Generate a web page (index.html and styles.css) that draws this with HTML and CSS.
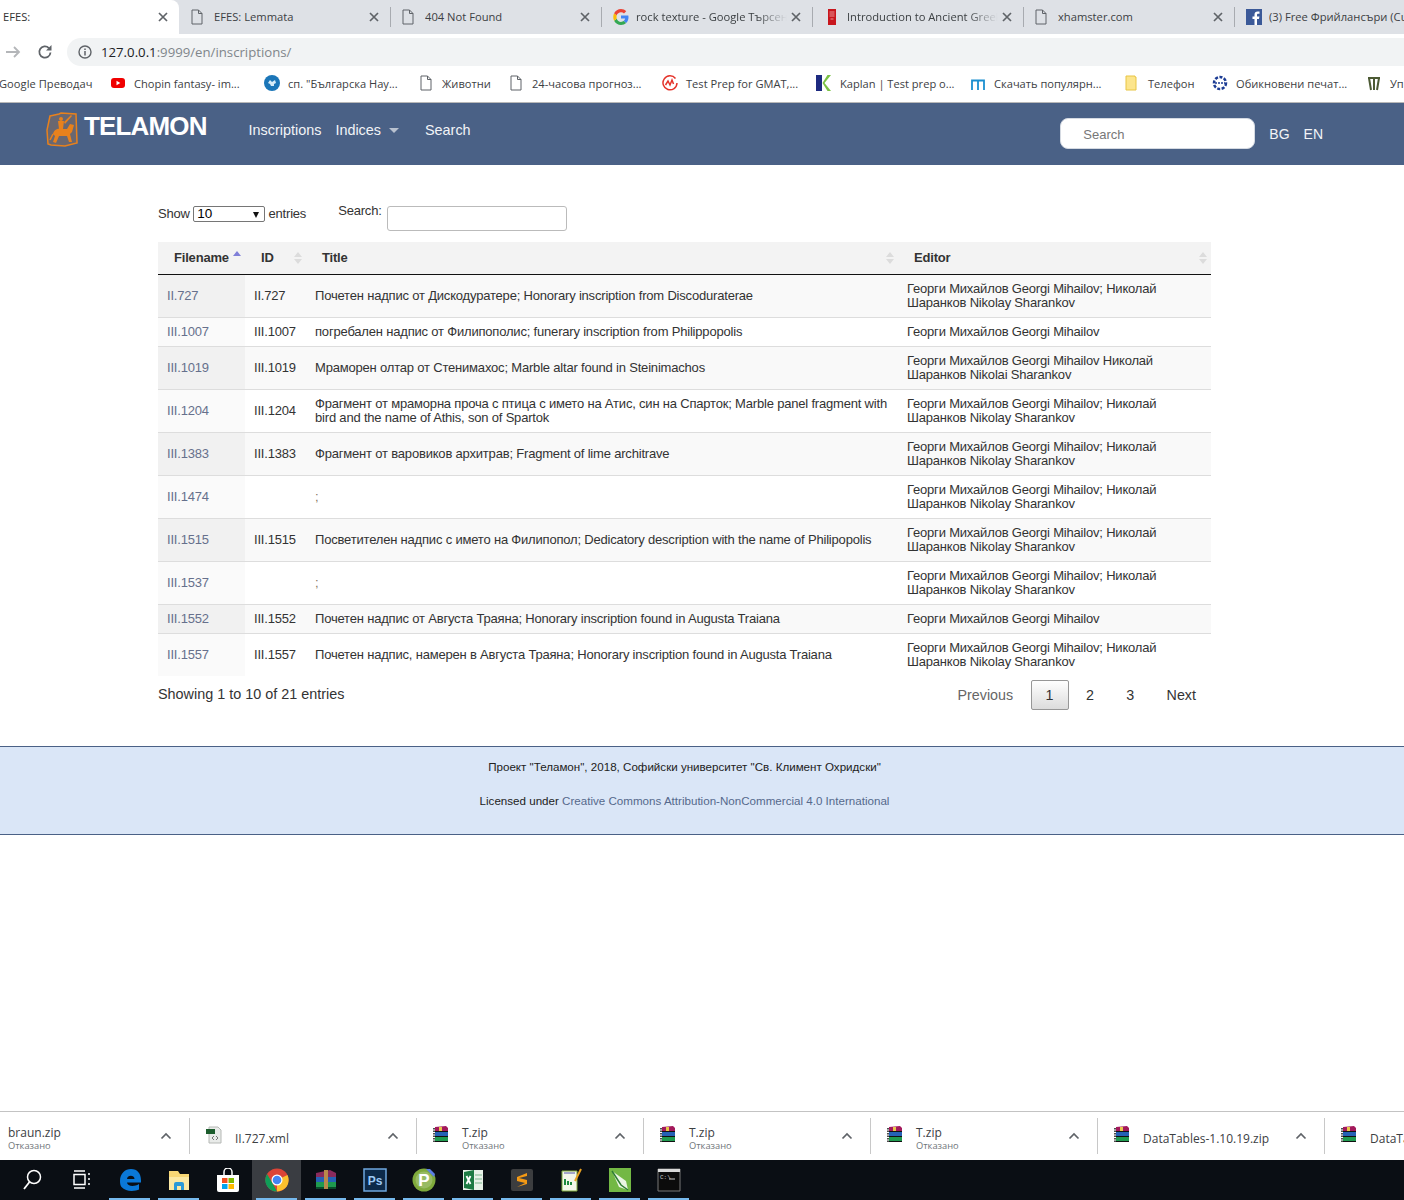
FILE: index.html
```html
<!DOCTYPE html>
<html>
<head>
<meta charset="utf-8">
<title>EFES:</title>
<link rel="stylesheet" href="styles.css">
</head>
<body>
<svg class="defs" width="0" height="0">
  <symbol id="i-file" viewBox="0 0 12 16"><path d="M1 1h6.500L11 4.500V15H1z M7.500 1v3.500H11" fill="none" stroke="#5f6368" stroke-width="1"/></symbol>
  <symbol id="i-close" viewBox="0 0 10 10"><path d="M1 1l8 8M9 1L1 9" stroke="#5f6368" stroke-width="1.700" fill="none"/></symbol>
  <symbol id="i-rar" viewBox="0 0 18 18">
    <path d="M3 1l11-1 2 2v4H3z" fill="#a3195b"/><path d="M7 1h3v4H7z" fill="#e8c84a"/>
    <path d="M3 6h13v5H3z" fill="#2561b5"/><path d="M3 11h13v5H3z" fill="#1f9a4f"/>
    <path d="M3 5.500h13M3 10.500h13M3 15.500h13" stroke="#111" stroke-width="1"/>
    <path d="M2 2v15" stroke="#222" stroke-width="1.600" stroke-dasharray="1.500 1"/>
  </symbol>
  <symbol id="i-chev" viewBox="0 0 12 8"><path d="M1.500 6.500L6 2l4.500 4.500" fill="none" stroke="#5f6368" stroke-width="1.700"/></symbol>
</svg>

<div class="chrome">
  <div class="tabstrip">
    <div class="tab tab-active"><span class="tab-title">EFES:</span><svg class="tab-x"><use href="#i-close"/></svg></div>
    <div class="tab"><svg class="fav-file"><use href="#i-file"/></svg><span class="tab-title">EFES: Lemmata</span><svg class="tab-x"><use href="#i-close"/></svg></div>
    <div class="tab tab-sep"><svg class="fav-file"><use href="#i-file"/></svg><span class="tab-title">404 Not Found</span><svg class="tab-x"><use href="#i-close"/></svg></div>
    <div class="tab tab-sep">
      <svg class="fav" viewBox="0 0 16 16"><path d="M15.500 8.200c0-.6-.1-1.100-.2-1.600H8v3h4.200c-.2 1-.7 1.800-1.600 2.400l2.500 2c1.500-1.400 2.400-3.400 2.400-5.800z" fill="#4285f4"/><path d="M8 16c2.100 0 3.900-.7 5.100-1.900l-2.500-2c-.7.500-1.500.8-2.600.8-2 0-3.700-1.400-4.300-3.200L1.100 11.700C2.400 14.300 5 16 8 16z" fill="#34a853"/><path d="M3.700 9.700c-.3-1-.3-2.400 0-3.400L1.100 4.300C0 6.500 0 9.500 1.100 11.700z" fill="#fbbc05"/><path d="M8 3.200c1.200 0 2.200.4 3 1.200l2.200-2.200C11.900.9 10.100 0 8 0 5 0 2.400 1.700 1.100 4.300l2.600 2C4.300 4.500 6 3.200 8 3.200z" fill="#ea4335"/></svg>
      <span class="tab-title tab-fade">rock texture - Google Търсене</span><svg class="tab-x"><use href="#i-close"/></svg></div>
    <div class="tab tab-sep">
      <svg class="fav" viewBox="0 0 16 16"><path d="M4 0h8v16H4z" fill="#c8161d"/><path d="M5.500 3h5M5.500 5h5M5.500 7h5M6.500 10h3" stroke="#f2b8b8" stroke-width=".8"/></svg>
      <span class="tab-title tab-fade">Introduction to Ancient Greek</span><svg class="tab-x"><use href="#i-close"/></svg></div>
    <div class="tab tab-sep"><svg class="fav-file"><use href="#i-file"/></svg><span class="tab-title">xhamster.com</span><svg class="tab-x"><use href="#i-close"/></svg></div>
    <div class="tab tab-sep">
      <svg class="fav" viewBox="0 0 16 16"><path d="M0 0h16v16H0z" fill="#3b5998"/><path d="M11 16V10h2l.4-2.500H11V6c0-.8.3-1.200 1.200-1.200h1.300V2.600c-.5-.1-1.200-.1-1.900-.1-1.900 0-3.100 1.100-3.100 3.200v1.800H6.500V10h2v6z" fill="#fff"/></svg>
      <span class="tab-title">(3) Free Фрийлансъри (Custom)</span></div>
  </div>

  <div class="toolbar">
    <svg class="tool-icon" viewBox="0 0 16 16"><path d="M1 8h13M9 3l5 5-5 5" fill="none" stroke="#b4b6b9" stroke-width="1.800"/></svg>
    <svg class="tool-icon" viewBox="0 0 16 16"><path d="M13.500 8.500a5.600 5.600 0 1 1-1.600-4.400" fill="none" stroke="#5f6368" stroke-width="1.800"/><path d="M14.500 1v5.500H9z" fill="#5f6368"/></svg>
    <div class="omnibox">
      <svg class="omni-info" viewBox="0 0 14 14"><circle cx="7" cy="7" r="6" fill="none" stroke="#5f6368" stroke-width="1.400"/><path d="M7 6v4.500M7 3.500v1.400" stroke="#5f6368" stroke-width="1.500"/></svg>
      <span class="url"><b>127.0.0.1</b>:9999/en/inscriptions/</span>
    </div>
  </div>

  <div class="bookmarks">
    <div class="bm bm-first"><span>Google Преводач</span></div>
    <div class="bm bm-yt"><svg class="fav" viewBox="0 0 16 16"><rect x="1" y="3" width="14" height="10" rx="3" fill="#f00000"/><path d="M6.500 5.800v4.400L10.300 8z" fill="#fff"/></svg><span>Chopin fantasy- im...</span></div>
    <div class="bm bm-bg"><svg class="fav" viewBox="0 0 16 16"><circle cx="8" cy="8" r="8" fill="#1b76b8"/><path d="M4 8l2-3 2 2 3-2 1 3-2 1v2H7L6 9z" fill="#d6ecf8"/></svg><span>сп. "Българска Нау...</span></div>
    <div class="bm bm-file"><svg class="fav-file"><use href="#i-file"/></svg><span>Животни</span></div>
    <div class="bm bm-file2"><svg class="fav-file"><use href="#i-file"/></svg><span>24-часова прогноз...</span></div>
    <div class="bm bm-gmat"><svg class="fav" viewBox="0 0 16 16"><path d="M13.500 3.500A7 7 0 1 0 15 8" fill="none" stroke="#e5332a" stroke-width="1.500"/><path d="M3.500 10l2.500-4 2 4 2-5 1.500 4" fill="none" stroke="#e5332a" stroke-width="1.500"/></svg><span>Test Prep for GMAT,...</span></div>
    <div class="bm bm-kap"><svg class="fav" viewBox="0 0 16 16"><path d="M0 0h6v16H0z" fill="#1d2a80"/><path d="M15 0L8.500 8l6.500 8h-3.500L6.500 8l5-8z" fill="#7ac143"/></svg><span>Kaplan | Test prep o...</span></div>
    <div class="bm bm-m"><svg class="fav" viewBox="0 0 16 16"><path d="M2 15V5.500h12V15M8 5.500V15" fill="none" stroke="#1b8fd0" stroke-width="1.800"/></svg><span>Скачать популярн...</span></div>
    <div class="bm bm-fold"><svg class="fav" viewBox="0 0 16 16"><path d="M2 1h9v1h1v13H2z" fill="#fce58c" stroke="#e8c544" stroke-width="1"/></svg><span>Телефон</span></div>
    <div class="bm bm-ob"><svg class="fav" viewBox="0 0 16 16"><circle cx="8" cy="8" r="6" fill="none" stroke="#1c3c94" stroke-width="2.500" stroke-dasharray="3 1.500"/><path d="M3 8h10" stroke="#1c3c94" stroke-width="1.500" stroke-dasharray="2 1"/></svg><span>Обикновени печат...</span></div>
    <div class="bm"><svg class="fav" viewBox="0 0 16 16"><path d="M3 3l2 12M8 2v13M13 3l-2 12M2 3h12" fill="none" stroke="#4c5a34" stroke-width="2"/></svg><span>Управление</span></div>
  </div>
</div>

<header class="navbar">
  <a class="logo">
    <svg class="logo-mark" viewBox="0 0 32 35">
      <path d="M4 4l9-2 2-1 15 1 1 29-12 3-14-1-3-1-1-14z" fill="#e8811c" fill-opacity=".2" stroke="#e8811c" stroke-width="1.500"/>
      <circle cx="15" cy="7" r="2" fill="#e8811c"/>
      <path d="M12 9h6l-1 8h-4zM18 10l7-7 1 1-7 8z" fill="#e8811c"/>
      <path d="M7 22C8 17 12 16 16 17h5l3-5 4 1-2 7-2 2 2 8h-3l-2-6h-8l-3 7-3-1 2-6z" fill="#e8811c"/>
      <path d="M7 22l-3 6" stroke="#e8811c" stroke-width="1.500"/>
    </svg>
    <span class="logo-text">TELAMON</span>
  </a>
  <nav class="nav-links">
    <a>Inscriptions</a>
    <a class="nav-indices">Indices<i class="caret"></i></a>
    <a>Search</a>
  </nav>
  <div class="nav-right">
    <input class="nav-search" type="text" placeholder="Search">
    <a class="lang">BG</a>
    <a class="lang">EN</a>
  </div>
</header>

<main class="content">
  <div class="controls">
    <label class="show-entries">Show <span class="select-wrap"><select class="len-select"><option>10</option><option>25</option></select></span> entries</label>
    <label class="table-search"><span>Search:</span><input type="text"></label>
  </div>

  <table class="inscriptions">
    <colgroup><col class="c-file"><col class="c-id"><col class="c-title"><col class="c-editor"></colgroup>
    <thead>
      <tr>
        <th class="sort-asc">Filename</th>
        <th>ID</th>
        <th>Title</th>
        <th>Editor</th>
      </tr>
    </thead>
    <tbody>
      <tr><td><a>II.727</a></td><td>II.727</td><td>Почетен надпис от Дискодуратере; Honorary inscription from Discoduraterae</td><td>Георги Михайлов Georgi Mihailov; Николай Шаранков Nikolay Sharankov</td></tr>
      <tr><td><a>III.1007</a></td><td>III.1007</td><td>погребален надпис от Филипополис; funerary inscription from Philippopolis</td><td>Георги Михайлов Georgi Mihailov</td></tr>
      <tr><td><a>III.1019</a></td><td>III.1019</td><td>Мраморен олтар от Стенимахос; Marble altar found in Steinimachos</td><td>Георги Михайлов Georgi Mihailov Николай Шаранков Nikolai Sharankov</td></tr>
      <tr><td><a>III.1204</a></td><td>III.1204</td><td>Фрагмент от мраморна проча с птица с името на Атис, син на Спарток; Marble panel fragment with bird and the name of Athis, son of Spartok</td><td>Георги Михайлов Georgi Mihailov; Николай Шаранков Nikolay Sharankov</td></tr>
      <tr><td><a>III.1383</a></td><td>III.1383</td><td>Фрагмент от варовиков архитрав; Fragment of lime architrave</td><td>Георги Михайлов Georgi Mihailov; Николай Шаранков Nikolay Sharankov</td></tr>
      <tr><td><a>III.1474</a></td><td></td><td class="empty-title">;</td><td>Георги Михайлов Georgi Mihailov; Николай Шаранков Nikolay Sharankov</td></tr>
      <tr><td><a>III.1515</a></td><td>III.1515</td><td>Посветителен надпис с името на Филипопол; Dedicatory description with the name of Philipopolis</td><td>Георги Михайлов Georgi Mihailov; Николай Шаранков Nikolay Sharankov</td></tr>
      <tr><td><a>III.1537</a></td><td></td><td class="empty-title">;</td><td>Георги Михайлов Georgi Mihailov; Николай Шаранков Nikolay Sharankov</td></tr>
      <tr><td><a>III.1552</a></td><td>III.1552</td><td>Почетен надпис от Августа Траяна; Honorary inscription found in Augusta Traiana</td><td>Георги Михайлов Georgi Mihailov</td></tr>
      <tr><td><a>III.1557</a></td><td>III.1557</td><td>Почетен надпис, намерен в Августа Траяна; Honorary inscription found in Augusta Traiana</td><td>Георги Михайлов Georgi Mihailov; Николай Шаранков Nikolay Sharankov</td></tr>
    </tbody>
  </table>

  <div class="table-foot">
    <div class="info">Showing 1 to 10 of 21 entries</div>
    <div class="pager">
      <a class="page-btn page-off">Previous</a>
      <a class="page-btn page-current">1</a>
      <a class="page-btn">2</a>
      <a class="page-btn">3</a>
      <a class="page-btn">Next</a>
    </div>
  </div>
</main>

<footer class="site-footer">
  <p>Проект "Теламон", 2018, Софийски университет "Св. Климент Охридски"</p>
  <p>Licensed under <a>Creative Commons Attribution-NonCommercial 4.0 International</a></p>
</footer>

<div class="spacer"></div>

<div class="shelf">
  <div class="dl"><div class="dl-text"><span class="dl-name">braun.zip</span><span class="dl-sub">Отказано</span></div><svg class="dl-chev"><use href="#i-chev"/></svg></div>
  <div class="dl"><svg class="dl-icon" viewBox="0 0 18 18"><path d="M4 1h9l3 3v13H4z" fill="#e9ebe9" stroke="#b5b8b5"/><path d="M1 3h9v5H1z" fill="#1c5c2c"/><path d="M9 10l-2 2 2 2M11 10l2 2-2 2" fill="none" stroke="#777"/></svg><div class="dl-text"><span class="dl-name dl-xml">II.727.xml</span></div><svg class="dl-chev"><use href="#i-chev"/></svg></div>
  <div class="dl"><svg class="dl-icon"><use href="#i-rar"/></svg><div class="dl-text"><span class="dl-name">T.zip</span><span class="dl-sub">Отказано</span></div><svg class="dl-chev"><use href="#i-chev"/></svg></div>
  <div class="dl"><svg class="dl-icon"><use href="#i-rar"/></svg><div class="dl-text"><span class="dl-name">T.zip</span><span class="dl-sub">Отказано</span></div><svg class="dl-chev"><use href="#i-chev"/></svg></div>
  <div class="dl"><svg class="dl-icon"><use href="#i-rar"/></svg><div class="dl-text"><span class="dl-name">T.zip</span><span class="dl-sub">Отказано</span></div><svg class="dl-chev"><use href="#i-chev"/></svg></div>
  <div class="dl"><svg class="dl-icon"><use href="#i-rar"/></svg><div class="dl-text"><span class="dl-name dl-xml">DataTables-1.10.19.zip</span></div><svg class="dl-chev"><use href="#i-chev"/></svg></div>
  <div class="dl"><svg class="dl-icon"><use href="#i-rar"/></svg><div class="dl-text"><span class="dl-name dl-xml">DataTables-1.10.19.zip</span></div></div>
</div>

<div class="taskbar">
  <div class="task"><svg class="task-icon" viewBox="0 0 24 24"><circle cx="14" cy="9" r="6.500" fill="none" stroke="#fff" stroke-width="1.500"/><path d="M9.500 14L4 21" stroke="#fff" stroke-width="1.800"/></svg></div>
  <div class="task"><svg class="task-icon" viewBox="0 0 24 24"><path d="M5 6.500h11v10H5zM5 3h11M5 20h11M19 6h2M19 11h2M19 16h2" fill="none" stroke="#fff" stroke-width="1.500"/></svg></div>
  <div class="task task-on"><svg class="task-icon" viewBox="0 0 24 24"><path d="M2 13C2 5.500 7 1 13 1c6.500 0 10 4.500 10 11.500v2H9c.3 3.500 6.500 5 12 1.500v5.500c-3 1.500-13 3-17.500-2.500C2.300 17.500 2 15 2 13zm7-2h7.500c0-4-7-4.500-7.500 0z" fill="#0a78d7"/></svg></div>
  <div class="task task-on"><svg class="task-icon" viewBox="0 0 24 24"><path d="M2 3h9l2 3h9v16H2z" fill="#f8d775"/><path d="M2 9h20v13H2z" fill="#fce9a4"/><path d="M7 22v-6a2 2 0 0 1 2-2h6a2 2 0 0 1 2 2v6h-3v-4h-4v4z" fill="#2b9ad8"/></svg></div>
  <div class="task"><svg class="task-icon" viewBox="0 0 24 24"><path d="M1 7h22v15a2 2 0 0 1-2 2H3a2 2 0 0 1-2-2z" fill="#fff"/><path d="M8 7V4a4 4 0 0 1 8 0v3" fill="none" stroke="#fff" stroke-width="1.500"/><path d="M6 10h5.500v5H6z" fill="#f25022"/><path d="M12.500 10H18v5h-5.500z" fill="#7fba00"/><path d="M6 16h5.500v5H6z" fill="#00a4ef"/><path d="M12.500 16H18v5h-5.500z" fill="#ffb900"/></svg></div>
  <div class="task task-on task-active"><svg class="task-icon" viewBox="0 0 24 24"><circle cx="12" cy="12" r="11.500" fill="#db4437"/><path d="M12 12L22.500 7A11.500 11.500 0 0 1 12 23.500z" fill="#fbc02d"/><path d="M12 23.500A11.500 11.500 0 0 1 2 6l6 10z" fill="#0f9d58"/><circle cx="12" cy="12" r="5.500" fill="#fff"/><circle cx="12" cy="12" r="4.300" fill="#4285f4"/></svg></div>
  <div class="task task-on"><svg class="task-icon" viewBox="0 0 24 24"><path d="M2 5l14-3 6 3v4H2z" fill="#8a2a5c"/><path d="M2 9h20v5H2z" fill="#2561b5"/><path d="M2 14h20v5H2z" fill="#1f9a4f"/><path d="M2 19h20v2H2z" fill="#0a4b2a"/><path d="M10 2h4v19h-4z" fill="#b98a4a"/></svg></div>
  <div class="task task-on"><svg class="task-icon" viewBox="0 0 24 24"><path d="M1 1h22v22H1z" fill="#0d2a4a" stroke="#6fa8e0" stroke-width="1.500"/><text class="ps-text" x="12" y="16.500" text-anchor="middle">Ps</text></svg></div>
  <div class="task task-on"><svg class="task-icon" viewBox="0 0 24 24"><circle cx="12" cy="12" r="11.500" fill="#7faa3c"/><circle cx="12" cy="12" r="8.500" fill="#fff" fill-opacity=".2"/><text class="p-text" x="12" y="18" text-anchor="middle">P</text><path d="M14 1l8 8 1-3-5-5z" fill="#5b7ee5"/></svg></div>
  <div class="task task-on"><svg class="task-icon" viewBox="0 0 24 24"><path d="M2 2h20v20H2z" fill="#e8f2e8"/><path d="M3 4l10-2v20L3 20z" fill="#1d7a43"/><path d="M5.500 8l4 8M9.500 8l-4 8" stroke="#fff" stroke-width="1.800"/><path d="M14 7h7M14 11h7M14 15h7" stroke="#7fb88f"/></svg></div>
  <div class="task task-on"><svg class="task-icon" viewBox="0 0 24 24"><rect x="1" y="1" width="22" height="22" rx="2" fill="#3c3d3f"/><path d="M17 5L7 9v4l8 2-8 4 10-3v-4L9 10l8-2z" fill="#f59a14"/></svg></div>
  <div class="task task-on"><svg class="task-icon" viewBox="0 0 24 24"><path d="M3 3h15v20H3z" fill="#f3f7e8" stroke="#7ea83c"/><path d="M5 5h11" stroke="#55a"/><path d="M6 17V11M9 17v-4M12 17v-3" stroke="#1f8a3f" stroke-width="2"/><path d="M16 13l6-12" stroke="#e8a020" stroke-width="2"/></svg></div>
  <div class="task task-on"><svg class="task-icon" viewBox="0 0 24 24"><path d="M1 0h22v24H1z" fill="#73b844"/><path d="M4 3l14 10 2 9-9-3z" fill="#fff" fill-opacity=".85"/><path d="M4 3l9 14 7 5" fill="none" stroke="#2e7d32" stroke-width="1.500"/></svg></div>
  <div class="task task-on"><svg class="task-icon" viewBox="0 0 24 24"><path d="M1 1h22v22H1z" fill="#0c0c0c" stroke="#777"/><path d="M1 1h22v3H1z" fill="#d9d9d9"/><text class="cmd-text" x="3" y="11">C:\</text><path d="M12 11h6" stroke="#ccc"/></svg></div>
</div>
</body>
</html>
```

FILE: styles.css
```css
html, body {
  margin: 0;
  padding: 0;
}

body {
  height: 1200px;
  overflow: hidden;
  display: flex;
  flex-direction: column;
  background: #fff;
  color: #333;
  font-family: "Liberation Sans", Arial, sans-serif;
  font-size: 14px;
}

.defs {
  position: absolute;
}

/* browser chrome */
.chrome {
  font-family: "Open Sans", "Noto Sans", sans-serif;
  flex-shrink: 0;
}

.tabstrip {
  height: 34px;
  display: flex;
  background: #dee1e6;
  overflow: hidden;
}

.tab {
  width: 211px;
  height: 34px;
  flex-shrink: 0;
  box-sizing: border-box;
  display: flex;
  align-items: center;
  padding: 0 11px 1px 12px;
  position: relative;
  font-size: 11.200px;
  color: #3c4043;
}

.tab-active {
  width: 179px;
  padding-left: 3px;
  padding-right: 11px;
  background: #fff;
  border-radius: 0 8px 0 0;
  color: #333;
}

.tab-sep::before {
  content: "";
  position: absolute;
  left: 0;
  top: 7px;
  height: 20px;
  width: 1px;
  background: #a8abb0;
}

.tab-title {
  flex: 1;
  white-space: nowrap;
  overflow: hidden;
}

.tab-fade {
  -webkit-mask-image: linear-gradient(to right, #000 80%, transparent);
  mask-image: linear-gradient(to right, #000 80%, transparent);
}

.tab-x {
  width: 10px;
  height: 10px;
  flex-shrink: 0;
  margin-left: 4px;
}

.fav {
  width: 16px;
  height: 16px;
  flex-shrink: 0;
  margin-right: 8px;
}

.tab .fav {
  margin-right: 7px;
}

.fav-file {
  width: 12px;
  height: 16px;
  flex-shrink: 0;
  margin-right: 11px;
}

.toolbar {
  height: 32px;
  box-sizing: border-box;
  padding-top: 4px;
  display: flex;
  align-items: center;
  background: #fff;
}

.tool-icon {
  width: 16px;
  height: 16px;
  flex-shrink: 0;
  margin-left: 5px;
  margin-right: 11px;
}

.tool-icon + .tool-icon {
  margin-left: 5px;
  margin-right: 14px;
}

.omnibox {
  flex: 1;
  height: 28px;
  margin-right: -20px;
  display: flex;
  align-items: center;
  background: #f1f3f4;
  border-radius: 14px;
  padding-left: 11px;
}

.omni-info {
  width: 14px;
  height: 14px;
  margin-right: 9px;
}

.url {
  font-size: 13.200px;
  color: #80868b;
}

.url b {
  font-weight: normal;
  color: #202124;
}

.bookmarks {
  height: 37px;
  box-sizing: border-box;
  padding-bottom: 2px;
  display: flex;
  align-items: center;
  border-bottom: 1px solid #b8b8b8;
  background: #fff;
  font-size: 11.100px;
  color: #3c4043;
  white-space: nowrap;
  overflow: hidden;
}

.bm {
  display: flex;
  align-items: center;
  flex-shrink: 0;
}

.bm .fav-file {
  margin-right: 10px;
}

.bm-first { width: 111px; margin-left: -1px; letter-spacing: 0.050px; }
.bm-yt { width: 154px; }
.bm-bg { width: 156px; }
.bm-file { width: 90px; }
.bm-file2 { width: 152px; }
.bm-gmat { width: 154px; }
.bm-kap { width: 154px; }
.bm-m { width: 154px; }
.bm-fold { width: 88px; }
.bm-ob { width: 154px; }

/* site header */
.navbar {
  height: 62px;
  flex-shrink: 0;
  display: flex;
  background: #4a6186;
  color: #f2f4f7;
  padding-left: 46px;
  padding-right: 81px;
}

.logo {
  display: flex;
  align-items: flex-start;
  padding-top: 9px;
}

.logo-mark {
  width: 32px;
  height: 35px;
  flex-shrink: 0;
}

.logo-text {
  margin-left: 6px;
  font-size: 26px;
  line-height: 29px;
  font-weight: bold;
  color: #fff;
  letter-spacing: -0.850px;
}

.nav-links {
  display: flex;
  align-items: flex-start;
  padding-top: 19px;
  margin-left: 42px;
  line-height: 16px;
  font-size: 14.400px;
}

.nav-indices {
  margin-left: 14px;
  margin-right: 26px;
}

.caret {
  display: inline-block;
  margin-left: 8px;
  vertical-align: 2px;
  border-left: 5.500px solid transparent;
  border-right: 5.500px solid transparent;
  border-top: 5px solid #b9c2d0;
}

.nav-right {
  margin-left: auto;
  display: flex;
  align-items: center;
}

.nav-search {
  width: 195px;
  height: 31px;
  margin-top: -1px;
  box-sizing: border-box;
  border: 1px solid #d5dae2;
  border-radius: 8px;
  padding: 1px 22px 0;
  background: #fff;
  font-family: inherit;
  font-size: 13px;
}

.nav-search::placeholder {
  color: #777;
  opacity: 1;
}

.lang {
  margin-left: 14px;
}

/* main table area */
.content {
  width: 1053px;
  margin-left: 158px;
  padding-top: 41px;
  flex-shrink: 0;
}

.controls {
  height: 36px;
  display: flex;
  align-items: flex-start;
  font-size: 13px;
  letter-spacing: -0.200px;
}

.show-entries {
  display: block;
  line-height: 15px;
}

.select-wrap {
  display: inline-block;
  position: relative;
  vertical-align: top;
}

.select-wrap::after {
  content: "";
  position: absolute;
  right: 6px;
  top: 6px;
  border-left: 3.500px solid transparent;
  border-right: 3.500px solid transparent;
  border-top: 6px solid #111;
}

.len-select {
  display: block;
  -webkit-appearance: none;
  appearance: none;
  width: 72px;
  height: 16px;
  padding: 0 0 0 3px;
  font-family: inherit;
  font-size: 13.500px;
  line-height: 14px;
  color: #000;
  background: #fff;
  border: 1px solid #767676;
  border-radius: 2px;
}

.table-search {
  display: flex;
  align-items: flex-start;
  margin-left: 32px;
}

.table-search span {
  margin-right: 5px;
  line-height: 10px;
}

.table-search input {
  width: 180px;
  height: 25px;
  box-sizing: border-box;
  border: 1px solid #bbb;
  border-radius: 3px;
}

.inscriptions {
  width: 1053px;
  table-layout: fixed;
  border-collapse: separate;
  border-spacing: 0;
  font-size: 13px;
  letter-spacing: -0.190px;
  line-height: 14px;
}

.c-file { width: 87px; }
.c-id { width: 61px; }
.c-title { width: 592px; }
.c-editor { width: 313px; }

.inscriptions th {
  height: 33px;
  padding: 0 16px;
  box-sizing: border-box;
  border-bottom: 1px solid #111;
  background: #f3f3f3;
  text-align: left;
  font-weight: bold;
  color: #333;
  position: relative;
}

/* datatables sort arrows */
.inscriptions th::before,
.inscriptions th::after {
  content: "";
  position: absolute;
  right: 4px;
  border-left: 4px solid transparent;
  border-right: 4px solid transparent;
}

.inscriptions th::before {
  top: 10px;
  border-bottom: 5px solid #dcdcdc;
}

.inscriptions th::after {
  top: 17px;
  border-top: 5px solid #dcdcdc;
}

.inscriptions th.sort-asc {
  padding-right: 0;
}

.inscriptions th.sort-asc::before {
  top: 9px;
  border-bottom-color: #7f7fd8;
}

.inscriptions th.sort-asc::after {
  display: none;
}

.inscriptions td {
  padding: 7px 9px;
  border-bottom: 1px solid #ddd;
  vertical-align: middle;
  color: #333;
}

.inscriptions tr:last-child td {
  border-bottom: none;
}

.inscriptions tr:nth-child(odd) td {
  background: #f9f9f9;
}

.inscriptions td:first-child {
  background: #fafafa;
}

.inscriptions tr:nth-child(odd) td:first-child {
  background: #f1f1f1;
}

.inscriptions td a {
  color: #66708c;
}

.inscriptions td.empty-title {
  color: #8a7565;
}

.table-foot {
  display: flex;
  justify-content: space-between;
  align-items: flex-start;
  padding-top: 4px;
}

.info {
  font-size: 14.400px;
  padding-top: 6px;
  line-height: 17px;
}

.pager {
  display: flex;
}

.page-btn {
  margin-left: 2.400px;
  padding: 0 14px;
  height: 28px;
  line-height: 28px;
  border: 1px solid transparent;
  border-radius: 2px;
  font-size: 14.300px;
  color: #333;
}

.page-off {
  color: #666;
}

.page-current {
  border-color: #979797;
  background: linear-gradient(to bottom, #fff, #dcdcdc);
}

/* footer */
.site-footer {
  margin-top: 36px;
  flex-shrink: 0;
  height: 89px;
  box-sizing: border-box;
  border-top: 1px solid #4a6186;
  border-bottom: 1px solid #4a6186;
  background: #dae6f7;
  padding: 13px 193px 0 158px;
  font-size: 11.600px;
  text-align: center;
  color: #222;
}

.site-footer p {
  margin: 0 0 20px;
  line-height: 14px;
}

.site-footer a {
  color: #55698c;
}

.spacer {
  flex: 1;
}

/* downloads shelf */
.shelf {
  height: 49px;
  flex-shrink: 0;
  box-sizing: border-box;
  border-top: 1px solid #c3c3c3;
  display: flex;
  align-items: center;
  overflow: hidden;
  background: #fff;
  font-family: "Open Sans", "Noto Sans", sans-serif;
  color: #3c4043;
}

.dl {
  width: 227px;
  height: 36px;
  flex-shrink: 0;
  box-sizing: border-box;
  display: flex;
  align-items: center;
  padding: 0 17px 0 15px;
  border-right: 1px solid #c8c8c8;
}

.dl:first-child {
  width: 190px;
  padding-left: 8px;
}

.dl:last-child {
  border-right: none;
}

.dl-icon {
  width: 18px;
  height: 18px;
  flex-shrink: 0;
  margin: 8px 12px 0 0;
  align-self: flex-start;
}

.dl-text {
  flex: 1;
  display: flex;
  flex-direction: column;
  min-width: 0;
  padding-top: 5px;
  white-space: nowrap;
}

.dl-name {
  font-size: 12px;
  line-height: 14px;
}

.dl-xml {
  line-height: 30px;
}

.dl-sub {
  font-size: 9.300px;
  line-height: 12px;
  color: #70757a;
}

.dl-chev {
  width: 12px;
  height: 8px;
  flex-shrink: 0;
}

/* windows taskbar */
.taskbar {
  height: 40px;
  flex-shrink: 0;
  display: flex;
  padding-left: 7px;
  background: #0a0e14;
}

.task {
  width: 49px;
  height: 40px;
  flex-shrink: 0;
  box-sizing: border-box;
  display: flex;
  align-items: center;
  justify-content: center;
  position: relative;
}

.task-on::after {
  content: "";
  position: absolute;
  left: 4px;
  right: 4px;
  bottom: 0;
  height: 2px;
  background: #76b9ed;
}

.task-active {
  background: #3a3d42;
}

.task-icon {
  width: 24px;
  height: 24px;
}

.ps-text {
  font-family: "Liberation Sans", sans-serif;
  font-size: 12px;
  font-weight: bold;
  fill: #9cc9f5;
}

.p-text {
  font-family: "Liberation Sans", sans-serif;
  font-size: 17px;
  font-weight: bold;
  fill: #fff;
}

.cmd-text {
  font-family: "Liberation Mono", monospace;
  font-size: 6px;
  fill: #ccc;
}
```
